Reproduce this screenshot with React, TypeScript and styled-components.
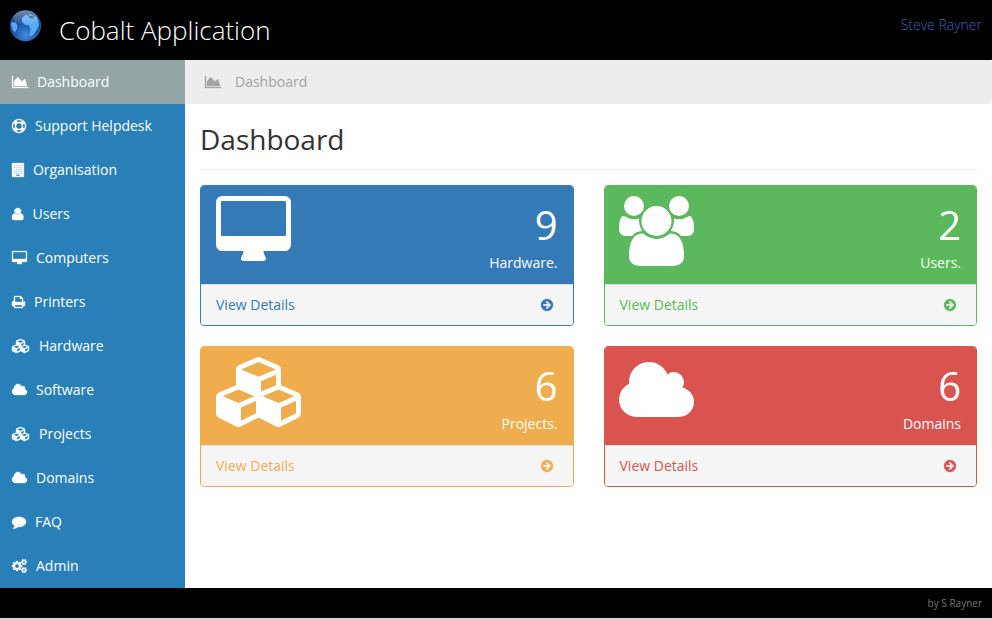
import React from "react";
import styled, { createGlobalStyle } from "styled-components";

type Glyph = { w: number; d: string; x?: number; stretch?: number };

// Glyphs are drawn on a 1792-unit em, each with its own advance width.
const glyphs: Record<string, Glyph> = {
  area: {
    w: 2048,
    d: "M2048 1536v128h-2048v-1536h128v1408h1920zm-384-1024l256 896h-1664v-576l448-576 576 576z",
  },
  ring: {
    w: 1792,
    d: "M896 0q182 0 348 71t286 191 191 286 71 348-71 348-191 286-286 191-348 71-348-71-286-191-191-286-71-348 71-348 191-286 286-191 348-71zm0 128q-190 0-361 90l194 194q82-28 167-28t167 28l194-194q-171-90-361-90zm-678 1129l194-194q-28-82-28-167t28-167l-194-194q-90 171-90 361t90 361zm678 407q190 0 361-90l-194-194q-82 28-167 28t-167-28l-194 194q171 90 361 90zm0-384q159 0 271.5-112.5t112.5-271.5-112.5-271.5-271.5-112.5-271.5 112.5-112.5 271.5 112.5 271.5 271.5 112.5zm484-217l194 194q90-171 90-361t-90-361l-194 194q28 82 28 167t-28 167z",
  },
  building: {
    w: 1408,
    stretch: 1.08,
    d:
      "M64 0h1280q26 0 45 19t19 45v1664q0 26-19 45t-45 19h-1280q-26 0-45-19t-19-45v-1664q0-26 19-45t45-19zM512 1472v192h384v-192z" +
      [256, 512, 768, 1024, 1280]
        .map((y) => [256, 512, 768, 1024].map((x) => `M${x} ${y}v96h128v-96z`).join(""))
        .join(""),
  },
  user: {
    w: 1280,
    stretch: 1.15,
    d: "M1536 1399q0 109-62.5 187t-150.5 78h-854q-88 0-150.5-78t-62.5-187q0-85 8.5-160.5t31.5-152 58.5-131 94-89 134.5-34.5q131 128 313 128t313-128q76 0 134.5 34.5t94 89 58.5 131 31.5 152 8.5 160.5zm-256-887q0 159-112.5 271.5t-271.5 112.5-271.5-112.5-112.5-271.5 112.5-271.5 271.5-112.5 271.5 112.5 112.5 271.5z",
    x: 256,
  },
  desktop: {
    w: 1920,
    d: "M1792 992v-832q0-13-9.5-22.5t-22.5-9.5h-1600q-13 0-22.5 9.5t-9.5 22.5v832q0 13 9.5 22.5t22.5 9.5h1600q13 0 22.5-9.5t9.5-22.5zm128-832v1088q0 66-47 113t-113 47h-544q0 37 16 77.5t32 71 16 43.5q0 26-19 45t-45 19h-512q-26 0-45-19t-19-45q0-14 16-44t32-70 16-78h-544q-66 0-113-47t-47-113v-1088q0-66 47-113t113-47h1600q66 0 113 47t47 113z",
  },
  print: {
    w: 1664,
    d: "M448 1536h896v-256h-896v256zm0-640h896v-384h-160q-40 0-68-28t-28-68v-160h-640v640zm1152 64q0-26-19-45t-45-19-45 19-19 45 19 45 45 19 45-19 19-45zm128 0v416q0 13-9.5 22.5t-22.5 9.5h-224v160q0 40-28 68t-68 28h-960q-40 0-68-28t-28-68v-160h-224q-13 0-22.5-9.5t-9.5-22.5v-416q0-79 56.5-135.5t135.5-56.5h64v-544q0-40 28-68t68-28h672q40 0 88 20t76 48l152 152q28 28 48 76t20 88v256h64q79 0 135.5 56.5t56.5 135.5z",
    x: 64,
  },
  cubes: {
    w: 2304,
    d: "M640 1632l384-192v-314l-384 164v342zm-64-454l404-173-404-173-404 173zm1088 454l384-192v-314l-384 164v342zm-64-454l404-173-404-173-404 173zm-448-293l384-165v-266l-384 164v267zm-64-379l441-189-441-189-441 189zm1088 518v416q0 36-19 67t-52 47l-448 224q-25 14-57 14t-57-14l-448-224q-4-2-7-4-2 2-7 4l-448 224q-25 14-57 14t-57-14l-448-224q-33-16-52-47t-19-67v-416q0-38 21.5-70t56.5-48l434-186v-400q0-38 21.5-70t56.5-48l448-192q23-10 50-10t50 10l448 192q35 16 56.5 48t21.5 70v400l434 186q36 16 57 48t21 70z",
  },
  cloud: {
    w: 1920,
    d: "M1920 1152q0 159-112.5 271.5t-271.5 112.5h-1088q-185 0-316.5-131.5t-131.5-316.5q0-132 71-241.5t187-163.5q-2-28-2-43 0-212 150-362t362-150q158 0 286.5 88t187.5 230q70-62 166-62 106 0 181 75t75 181q0 75-41 138 129 30 213 134.5t84 239.5z",
  },
  comment: {
    w: 1792,
    d: "M1792 896q0 174-120 321.5t-326 233-450 85.5q-70 0-145-8-198 175-460 225-49 14-114 22-17 2-30.5-9t-17.5-29v-1q-3-4-.5-12t2-10 4.5-9.5l6-9 7-8.5 8-9q7-8 31-34.5t34.5-38 31-39.5 32.5-51 27-59 26-76q-157-89-247.5-220t-90.5-281q0-130 71-248.5t191-204.5 286-136.5 348-50.5q244 0 450 85.5t326 233 120 321.5z",
  },
  cogs: {
    w: 1920,
    d: "M896 896q0-106-75-181t-181-75-181 75-75 181 75 181 181 75 181-75 75-181zm768 512q0-52-38-90t-90-38-90 38-38 90q0 53 37.5 90.5t90.5 37.5 90.5-37.5 37.5-90.5zm0-1024q0-52-38-90t-90-38-90 38-38 90q0 53 37.5 90.5t90.5 37.5 90.5-37.5 37.5-90.5zm-384 421v185q0 10-7 19.5t-16 10.5l-155 24q-11 35-32 76 34 48 90 115 7 11 7 20 0 12-7 19-23 30-82.5 89.5t-78.5 59.5q-11 0-21-7l-115-90q-37 19-77 31-11 108-23 155-7 24-30 24h-186q-11 0-20-7.5t-10-17.5l-23-153q-34-10-75-31l-118 89q-7 7-20 7-11 0-21-8-144-133-144-160 0-9 7-19 10-14 41-53t47-61q-23-44-35-82l-152-24q-10-1-17-9.5t-7-19.5v-185q0-10 7-19.5t16-10.5l155-24q11-35 32-76-34-48-90-115-7-11-7-20 0-12 7-20 22-30 82-89t79-59q11 0 21 7l115 90q34-18 77-32 11-108 23-154 7-24 30-24h186q11 0 20 7.5t10 17.5l23 153q34 10 75 31l118-89q8-7 20-7 11 0 21 8 144 133 144 160 0 8-7 19-12 16-42 54t-45 60q23 48 34 82l152 23q10 2 17 10.5t7 19.5zm640 533v140q0 16-149 31-12 27-30 52 51 113 51 138 0 4-4 7-122 71-124 71-8 0-46-47t-52-68q-20 2-30 2t-30-2q-14 21-52 68t-46 47q-2 0-124-71-4-3-4-7 0-25 51-138-18-25-30-52-149-15-149-31v-140q0-16 149-31 13-29 30-52-51-113-51-138 0-4 4-7 4-2 35-20t59-34 30-16q8 0 46 46.5t52 67.5q20-2 30-2t30 2q51-71 92-112l6-2q4 0 124 70 4 3 4 7 0 25-51 138 17 23 30 52 149 15 149 31zm0-1024v140q0 16-149 31-12 27-30 52 51 113 51 138 0 4-4 7-122 71-124 71-8 0-46-47t-52-68q-20 2-30 2t-30-2q-14 21-52 68t-46 47q-2 0-124-71-4-3-4-7 0-25 51-138-18-25-30-52-149-15-149-31v-140q0-16 149-31 13-29 30-52-51-113-51-138 0-4 4-7 4-2 35-20t59-34 30-16q8 0 46 46.5t52 67.5q20-2 30-2t30 2q51-71 92-112l6-2q4 0 124 70 4 3 4 7 0 25-51 138 17 23 30 52 149 15 149 31z",
  },
  users: {
    w: 1920,
    d: "M593 896q-162 5-265 128h-134q-82 0-138-40.5t-56-118.5q0-353 124-353 6 0 43.5 21t97.5 42.5 119 21.5q67 0 133-23-5 37-5 66 0 139 81 256zm1071 637q0 120-73 189.5t-194 69.5h-874q-121 0-194-69.5t-73-189.5q0-53 3.5-103.5t14-109 26.5-108.5 43-97.5 62-81 85.5-53.5 111.5-20q10 0 43 21.5t73 48 107 48 135 21.5 135-21.5 107-48 73-48 43-21.5q61 0 111.5 20t85.5 53.5 62 81 43 97.5 26.5 108.5 14 109 3.5 103.5zm-1024-1277q0 106-75 181t-181 75-181-75-75-181 75-181 181-75 181 75 75 181zm704 384q0 159-112.5 271.5t-271.5 112.5-271.5-112.5-112.5-271.5 112.5-271.5 271.5-112.5 271.5 112.5 112.5 271.5zm576 225q0 78-56 118.5t-138 40.5h-134q-103-123-265-128 81-117 81-256 0-29-5-66 66 23 133 23 59 0 119-21.5t97.5-42.5 43.5-21q124 0 124 353zm-128-609q0 106-75 181t-181 75-181-75-75-181 75-181 181-75 181 75 75 181z",
  },
  arrow: {
    w: 1536,
    d: "M1413 896q0-27-18-45l-91-91-362-362q-18-18-45-18t-45 18l-91 91q-18 18-18 45t18 45l189 189h-502q-26 0-45 19t-19 45v128q0 26 19 45t45 19h502l-189 189q-18 18-18 45t18 45l91 91q18 18 45 18t45-18l362-362 91-91q18-18 18-45zm251 0q0 209-103 385.5t-279.5 279.5-385.5 103-385.5-103-279.5-279.5-103-385.5 103-385.5 279.5-279.5 385.5-103 385.5 103 279.5 279.5 103 385.5z",
    x: 128,
  },
};

const GlobalStyle = createGlobalStyle`
  * { box-sizing: border-box; }
  body {
    margin: 0;
    background: #fff;
    font-family: "Open Sans", sans-serif;
    font-size: 14px;
    line-height: 20px;
    overflow: hidden;
  }
`;

const IconSvg = styled.svg<{ $bold?: boolean }>`
  display: block;
  flex: none;
  overflow: visible;
  fill: currentColor;
  stroke: currentColor;
  stroke-width: ${(p) => (p.$bold ? 40 : 0)};
`;

function Icon({ name, size = 14 }: { name: string; size?: number }) {
  const g = glyphs[name];
  return (
    <IconSvg
      $bold={size < 20}
      width={(g.w * size * (g.stretch ?? 1)) / 1792}
      height={size}
      viewBox={`${g.x ?? 0} 0 ${g.w} 1792`}
      preserveAspectRatio="none"
      fillRule="evenodd"
      aria-hidden
    >
      <path d={g.d} />
    </IconSvg>
  );
}

const Page = styled.div`
  display: flex;
  flex-direction: column;
  height: 619px;
  width: 992px;
`;

const Header = styled.header`
  display: flex;
  align-items: flex-start;
  height: 60px;
  padding: 9px 10px;
  background: #000;
`;

const Globe = styled.svg`
  display: block;
  width: 33px;
  height: 33px;
`;

const Brand = styled.h1`
  margin: 3px 0 0 16px;
  color: #fff;
  font-size: 26px;
  font-weight: 300;
  line-height: 36px;
  white-space: nowrap;
`;

const Account = styled.a`
  margin: 6px 0 0 auto;
  color: #3566bd;
  font-weight: 300;
`;

const Body = styled.div`
  display: flex;
  height: 528px;
`;

const Sidebar = styled.nav`
  width: 185px;
  background: #2980b9;
`;

const NavItem = styled.a<{ $active?: boolean }>`
  display: flex;
  align-items: center;
  gap: 9px;
  height: 44px;
  padding: 0 12px;
  color: #fff;
  background: ${(p) => (p.$active ? "#95a5a6" : "transparent")};
  white-space: nowrap;
`;

const Main = styled.main`
  flex: 1;
`;

const Breadcrumb = styled.div`
  display: flex;
  align-items: center;
  gap: 14px;
  height: 44px;
  padding: 0 20px;
  color: #a3a3a3;
  background: #ededed;
  border-radius: 0 4px 4px 0;
`;

const Content = styled.section`
  padding: 0 15px;
`;

const Title = styled.h2`
  height: 66px;
  margin: 0 0 15px;
  padding-top: 15px;
  border-bottom: 1px solid #eee;
  color: #333;
  font-size: 28px;
  font-weight: 400;
  line-height: 40px;
`;

const Grid = styled.div`
  display: grid;
  grid-template-columns: 1fr 1fr;
  gap: 20px 30px;
`;

const Panel = styled.article<{ $tone: string }>`
  height: 141px;
  overflow: hidden;
  border: 1px solid ${(p) => p.$tone};
  border-radius: 4px;
  color: ${(p) => p.$tone};
`;

const PanelHeading = styled.div<{ $tone: string }>`
  display: flex;
  justify-content: space-between;
  height: 98px;
  padding: 10px 15px 10px 14.5px;
  color: #fff;
  background: ${(p) => p.$tone};
`;

const Stat = styled.div`
  text-align: right;
`;

const Count = styled.div`
  font-size: 40px;
  line-height: 57px;
`;

const PanelFooter = styled.a`
  display: flex;
  align-items: center;
  justify-content: space-between;
  height: 41px;
  padding: 0 20px 0 15px;
  border-top: 1px solid #ddd;
  background: #f5f5f5;
`;

const Footer = styled.footer`
  height: 31px;
  padding: 6px 10px 0;
  border-bottom: 1px solid #ddd;
  background: #000;
  color: #777;
  font-size: 10px;
  line-height: 19px;
  text-align: right;
`;

const menu = [
  ["area", "Dashboard"],
  ["ring", "Support Helpdesk"],
  ["building", "Organisation"],
  ["user", "Users"],
  ["desktop", "Computers"],
  ["print", "Printers"],
  ["cubes", "Hardware"],
  ["cloud", "Software"],
  ["cubes", "Projects"],
  ["cloud", "Domains"],
  ["comment", "FAQ"],
  ["cogs", "Admin"],
];

const panels = [
  { icon: "desktop", count: 9, label: "Hardware.", tone: "#337ab7" },
  { icon: "users", count: 2, label: "Users.", tone: "#5cb85c" },
  { icon: "cubes", count: 6, label: "Projects.", tone: "#f0ad4e" },
  { icon: "cloud", count: 6, label: "Domains", tone: "#d9534f" },
];

export default function App() {
  return (
    <Page>
      <GlobalStyle />
      <Header>
        <Globe viewBox="0 0 33 33" aria-hidden>
          <defs>
            <radialGradient id="sea" cx="50%" cy="80%" r="75%">
              <stop offset="0" stopColor="#3f8de0" />
              <stop offset="0.5" stopColor="#1d55a8" />
              <stop offset="1" stopColor="#183a78" />
            </radialGradient>
            <linearGradient id="shine" x1="0" y1="0" x2="0" y2="1">
              <stop offset="0" stopColor="#fff" stopOpacity="0.4" />
              <stop offset="1" stopColor="#fff" stopOpacity="0" />
            </linearGradient>
          </defs>
          <circle cx="15.5" cy="16.8" r="15.3" fill="url(#sea)" stroke="#4b83c7" strokeWidth="0.5" />
          <path
            d="M12 9l3-3 6-.5 5 2 2.500 4 .5 5-2 4-2.500 4-3.500 3-1.500-2 1-5-1.500-4-4.500-1-2.500-3z"
            fill="#58a9f0"
          />
          <path d="M1.500 13l4 .5 2 3-.5 3-2 4-2.500-3-1.200-4z" fill="#58a9f0" />
          <path d="M17 6.500l4 1 4-.5M19 8.500l5 .5" stroke="#17427f" strokeWidth="1" fill="none" />
          <ellipse cx="15.5" cy="9" rx="12" ry="7.500" fill="url(#shine)" />
        </Globe>
        <Brand>Cobalt Application</Brand>
        <Account>Steve Rayner</Account>
      </Header>
      <Body>
        <Sidebar>
          {menu.map(([icon, label], i) => (
            <NavItem key={label} $active={i === 0}>
              <Icon name={icon} />
              {label}
            </NavItem>
          ))}
        </Sidebar>
        <Main>
          <Breadcrumb>
            <Icon name="area" />
            Dashboard
          </Breadcrumb>
          <Content>
            <Title>Dashboard</Title>
            <Grid>
              {panels.map((p) => (
                <Panel key={p.icon} $tone={p.tone}>
                  <PanelHeading $tone={p.tone}>
                    <Icon name={p.icon} size={70} />
                    <Stat>
                      <Count>{p.count}</Count>
                      {p.label}
                    </Stat>
                  </PanelHeading>
                  <PanelFooter>
                    View Details
                    <Icon name="arrow" />
                  </PanelFooter>
                </Panel>
              ))}
            </Grid>
          </Content>
        </Main>
      </Body>
      <Footer>by S Rayner</Footer>
    </Page>
  );
}
